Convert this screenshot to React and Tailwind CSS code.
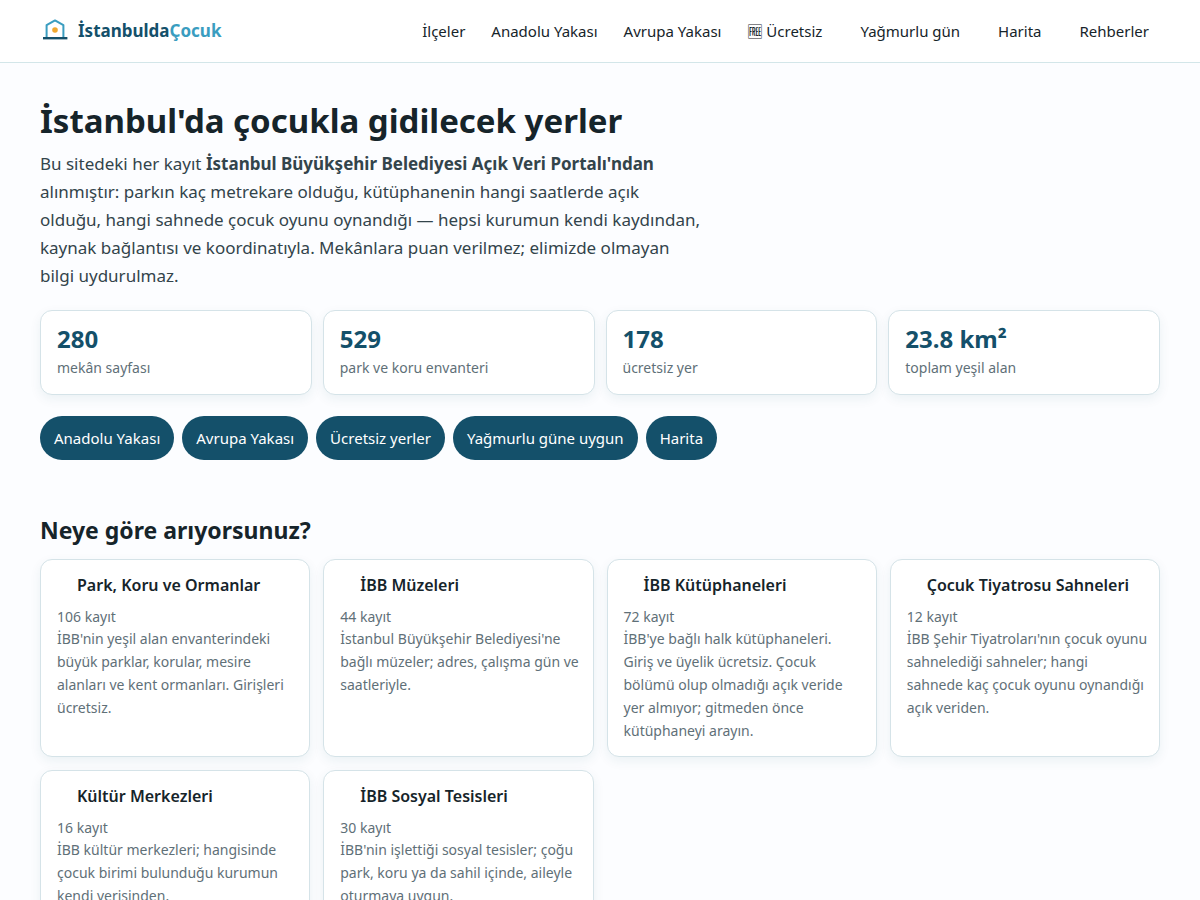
const navLinks = [
  { label: 'İlçeler', href: '#ilceler' },
  { label: 'Anadolu Yakası', href: '#anadolu' },
  { label: 'Avrupa Yakası', href: '#avrupa' },
  { label: '🆓 Ücretsiz', href: '#ucretsiz' },
  { label: 'Yağmurlu gün', href: '#yagmurlu', indent: true },
  { label: 'Harita', href: '#harita', indent: true },
  { label: 'Rehberler', href: '#rehberler', indent: true },
];

const stats = [
  { value: '280', label: 'mekân sayfası' },
  { value: '529', label: 'park ve koru envanteri' },
  { value: '178', label: 'ücretsiz yer' },
  { value: '23.8 km²', label: 'toplam yeşil alan' },
];

const chips = [
  { label: 'Anadolu Yakası', href: '#anadolu' },
  { label: 'Avrupa Yakası', href: '#avrupa' },
  { label: 'Ücretsiz yerler', href: '#ucretsiz' },
  { label: 'Yağmurlu güne uygun', href: '#yagmurlu' },
  { label: 'Harita', href: '#harita' },
];

const categories = [
  {
    title: 'Park, Koru ve Ormanlar',
    count: 106,
    text: "İBB'nin yeşil alan envanterindeki büyük parklar, korular, mesire alanları ve kent ormanları. Girişleri ücretsiz.",
  },
  {
    title: 'İBB Müzeleri',
    count: 44,
    text: "İstanbul Büyükşehir Belediyesi'ne bağlı müzeler; adres, çalışma gün ve saatleriyle.",
  },
  {
    title: 'İBB Kütüphaneleri',
    count: 72,
    text: "İBB'ye bağlı halk kütüphaneleri. Giriş ve üyelik ücretsiz. Çocuk bölümü olup olmadığı açık veride yer almıyor; gitmeden önce kütüphaneyi arayın.",
  },
  {
    title: 'Çocuk Tiyatrosu Sahneleri',
    count: 12,
    text: "İBB Şehir Tiyatroları'nın çocuk oyunu sahnelediği sahneler; hangi sahnede\u00a0kaç çocuk oyunu oynandığı açık veriden.",
  },
  {
    title: 'Kültür Merkezleri',
    count: 16,
    text: 'İBB kültür merkezleri; hangisinde çocuk birimi bulunduğu kurumun kendi verisinden.',
  },
  {
    title: 'İBB Sosyal Tesisleri',
    count: 30,
    text: "İBB'nin işlettiği sosyal tesisler; çoğu park, koru ya da sahil içinde, aileyle oturmaya uygun.",
  },
];

function Logo() {
  return (
    <svg width="30" height="30" viewBox="0 0 30 30" fill="none" aria-hidden="true">
      <path d="M6.6 21.5V9.2L15 4.4l8.4 4.8v12.3" stroke="#3a9dc0" strokeWidth="2" strokeLinejoin="round" />
      <path d="M3 22.2h24.4" stroke="#14506a" strokeWidth="2.4" />
      <circle cx="15" cy="14" r="2.8" fill="#f0a830" />
    </svg>
  );
}

function Header() {
  return (
    <header className="border-b border-[#d3e6e9] bg-white">
      <div className="mx-auto flex h-[62px] max-w-[1200px] items-center justify-between px-10">
        <a href="#" className="flex items-center gap-2 text-[17px] font-bold text-[#14506a]">
          <Logo />
          <span>
            İstanbulda<span className="text-[#3a9dc0]">Çocuk</span>
          </span>
        </a>
        <nav className="flex items-center gap-1 text-[15px]">
          {navLinks.map((l) => (
            <a key={l.label} href={l.href} className={l.indent ? 'pr-[11px] pl-[23px]' : 'px-[11px]'}>
              {l.label}
            </a>
          ))}
        </nav>
      </div>
    </header>
  );
}

export default function App() {
  return (
    <div className="min-h-screen bg-[#fcfdff] font-['Noto_Sans','Noto_Sans_CJK_JP',sans-serif] text-[#16242a]">
      <Header />

      <main className="mx-auto max-w-[1200px] px-10 pt-9 pb-12">
        <h1 className="text-[33px] leading-[44px] font-bold">İstanbul'da çocukla gidilecek yerler</h1>
        <p className="mt-[7px] max-w-[664px] text-[17px] leading-7 text-[#33444b]">
          Bu sitedeki her kayıt <strong>İstanbul Büyükşehir Belediyesi Açık Veri Portalı'ndan</strong> alınmıştır:
          parkın kaç metrekare olduğu, kütüphanenin hangi saatlerde açık olduğu, hangi sahnede çocuk oyunu
          oynandığı — hepsi kurumun kendi kaydından, kaynak bağlantısı ve koordinatıyla. Mekânlara puan
          verilmez; elimizde olmayan bilgi uydurulmaz.
        </p>

        {/* Stats */}
        <div className="mt-5 grid grid-cols-4 gap-[11px]">
          {stats.map((s) => (
            <div
              key={s.label}
              className="rounded-xl border border-[#d5e3e8] bg-white px-4 py-3 shadow-[0_4px_12px_rgba(20,80,106,0.07)]"
            >
              <div className="text-2xl leading-[31px] font-bold text-[#14506a]">{s.value}</div>
              <div className="mt-[2px] pb-[2px] text-sm leading-6 text-[#5f7078]">{s.label}</div>
            </div>
          ))}
        </div>

        {/* Quick filters */}
        <div className="mt-[21px] flex flex-wrap gap-2">
          {chips.map((c) => (
            <a
              key={c.label}
              href={c.href}
              className="flex h-11 items-center rounded-full bg-[#14506a] px-[14px] text-[15px] text-white"
            >
              {c.label}
            </a>
          ))}
        </div>

        <section className="mt-[54px]">
          <h2 className="text-[23px] leading-8 font-bold">Neye göre arıyorsunuz?</h2>
          <div className="mt-[13px] grid grid-cols-4 gap-[13px]">
            {categories.map((c) => (
              <a
                key={c.title}
                href="#"
                className="rounded-xl border border-[#d5e3e8] bg-white pt-[15px] pr-[11px] pb-[14px] pl-4 text-sm text-[#5f7078] shadow-[0_4px_12px_rgba(20,80,106,0.07)]"
              >
                <h3 className="pl-5 text-base leading-5 font-semibold text-[#16242a]">{c.title}</h3>
                <p className="mt-[11px] leading-[21px]">{c.count} kayıt</p>
                <p className="leading-[23px]">{c.text}</p>
              </a>
            ))}
          </div>
        </section>
      </main>
    </div>
  );
}
